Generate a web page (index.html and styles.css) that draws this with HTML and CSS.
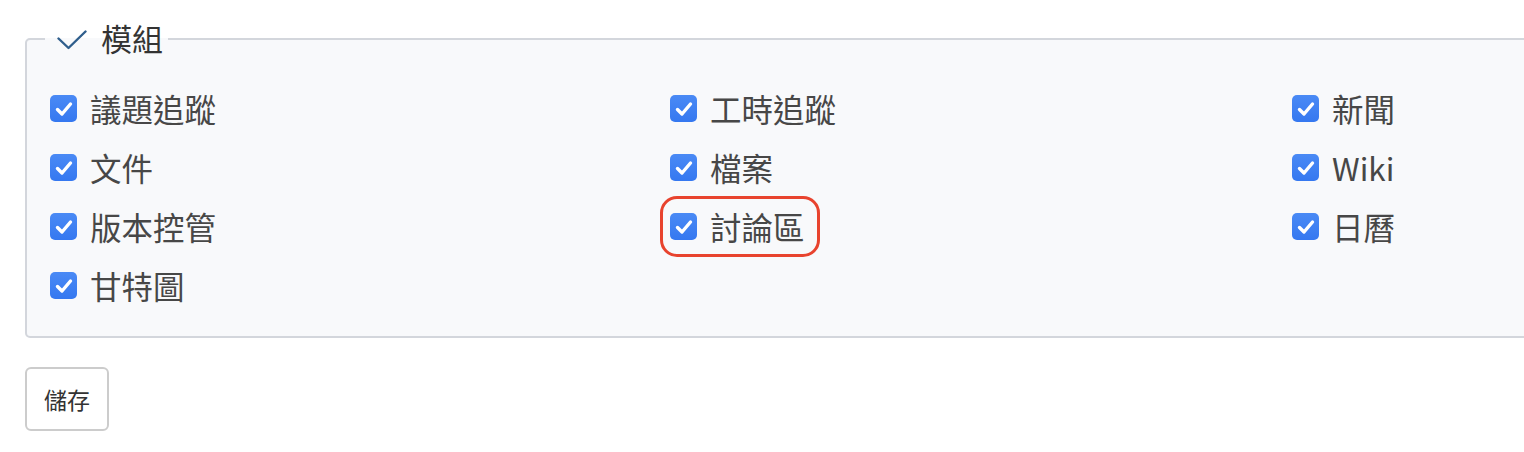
FILE: index.html
```html
<!DOCTYPE html>
<html lang="zh-Hant">
<head>
<meta charset="utf-8">
<title>模組</title>
<link rel="stylesheet" href="styles.css">
</head>
<body>
<div class="page">
  <fieldset class="modules">
    <legend class="legend">
      <svg class="legend-icon" width="30" height="20" viewBox="0 0 30 20"><path d="M1.5 8.5 L11.5 18 L28.5 1.5" fill="none" stroke="#2f5e8c" stroke-width="2.4" stroke-linecap="round" stroke-linejoin="round"/></svg>
      <span class="legend-text">模組</span>
    </legend>
    <div class="grid">
      <label class="item"><span class="cb"><svg viewBox="0 0 26 26" width="26" height="26"><path d="M6.5 13.5 L11 18 L19.5 8" fill="none" stroke="#fff" stroke-width="3.4" stroke-linecap="round" stroke-linejoin="round"/></svg></span><span class="txt">議題追蹤</span></label>
      <label class="item"><span class="cb"><svg viewBox="0 0 26 26" width="26" height="26"><path d="M6.5 13.5 L11 18 L19.5 8" fill="none" stroke="#fff" stroke-width="3.4" stroke-linecap="round" stroke-linejoin="round"/></svg></span><span class="txt">工時追蹤</span></label>
      <label class="item"><span class="cb"><svg viewBox="0 0 26 26" width="26" height="26"><path d="M6.5 13.5 L11 18 L19.5 8" fill="none" stroke="#fff" stroke-width="3.4" stroke-linecap="round" stroke-linejoin="round"/></svg></span><span class="txt">新聞</span></label>
      <label class="item"><span class="cb"><svg viewBox="0 0 26 26" width="26" height="26"><path d="M6.5 13.5 L11 18 L19.5 8" fill="none" stroke="#fff" stroke-width="3.4" stroke-linecap="round" stroke-linejoin="round"/></svg></span><span class="txt">文件</span></label>
      <label class="item"><span class="cb"><svg viewBox="0 0 26 26" width="26" height="26"><path d="M6.5 13.5 L11 18 L19.5 8" fill="none" stroke="#fff" stroke-width="3.4" stroke-linecap="round" stroke-linejoin="round"/></svg></span><span class="txt">檔案</span></label>
      <label class="item"><span class="cb"><svg viewBox="0 0 26 26" width="26" height="26"><path d="M6.5 13.5 L11 18 L19.5 8" fill="none" stroke="#fff" stroke-width="3.4" stroke-linecap="round" stroke-linejoin="round"/></svg></span><span class="txt">Wiki</span></label>
      <label class="item"><span class="cb"><svg viewBox="0 0 26 26" width="26" height="26"><path d="M6.5 13.5 L11 18 L19.5 8" fill="none" stroke="#fff" stroke-width="3.4" stroke-linecap="round" stroke-linejoin="round"/></svg></span><span class="txt">版本控管</span></label>
      <label class="item highlighted"><span class="cb"><svg viewBox="0 0 26 26" width="26" height="26"><path d="M6.5 13.5 L11 18 L19.5 8" fill="none" stroke="#fff" stroke-width="3.4" stroke-linecap="round" stroke-linejoin="round"/></svg></span><span class="txt">討論區</span></label>
      <label class="item"><span class="cb"><svg viewBox="0 0 26 26" width="26" height="26"><path d="M6.5 13.5 L11 18 L19.5 8" fill="none" stroke="#fff" stroke-width="3.4" stroke-linecap="round" stroke-linejoin="round"/></svg></span><span class="txt">日曆</span></label>
      <label class="item"><span class="cb"><svg viewBox="0 0 26 26" width="26" height="26"><path d="M6.5 13.5 L11 18 L19.5 8" fill="none" stroke="#fff" stroke-width="3.4" stroke-linecap="round" stroke-linejoin="round"/></svg></span><span class="txt">甘特圖</span></label>
    </div>
  </fieldset>
  <button class="save" type="button">儲存</button>
</div>
</body>
</html>
```
FILE: styles.css
```css
html, body {
  margin: 0;
  padding: 0;
  background: #ffffff;
  overflow: hidden;
}
body {
  font-family: "Noto Sans CJK TC", "Noto Sans", sans-serif;
  width: 1524px;
  height: 452px;
}
.page {
  padding: 0 0 0 25px;
  width: 2000px;
}
.modules {
  margin: 21px 0 0 0;
  width: 1880px;
  border: 2px solid #d3d6dc;
  border-radius: 5px;
  background: #f8f9fb;
  padding: 22px 0 21px 23px;
  box-sizing: border-box;
}
.legend {
  display: flex;
  align-items: center;
  height: 36px;
  padding: 0 5px 0 12px;
  margin-left: -5px;
  gap: 14px;
}
.legend-icon {
  display: block;
  margin-top: 1px;
}
.legend-text {
  font-size: 31px;
  line-height: 36px;
  color: #333333;
  margin-top: -2px;
}
.grid {
  display: grid;
  grid-template-columns: 620px 622px 620px;
  grid-auto-rows: 59px;
}
.item {
  display: flex;
  align-items: center;
  gap: 13px;
  position: relative;
  align-self: center;
  justify-self: start;
  height: 59px;
}
.cb {
  width: 27px;
  height: 27px;
  border-radius: 5px;
  background: linear-gradient(#4a8af5, #3578f0);
  display: flex;
  align-items: center;
  justify-content: center;
}
.cb svg {
  display: block;
}
.txt {
  font-size: 31.5px;
  line-height: 40px;
  color: #474747;
  margin-top: -1px;
}
.highlighted::after {
  content: "";
  position: absolute;
  left: -10px;
  right: -15px;
  top: -1px;
  bottom: -1px;
  border: 3px solid #e8432e;
  border-radius: 17px;
}
.save {
  display: block;
  margin-top: 29px;
  width: 84px;
  height: 64px;
  border: 2px solid #cccccc;
  border-radius: 6px;
  background: #ffffff;
  font-family: "Noto Sans CJK TC", "Noto Sans", sans-serif;
  font-size: 23px;
  color: #333333;
  padding: 0;
}
```
